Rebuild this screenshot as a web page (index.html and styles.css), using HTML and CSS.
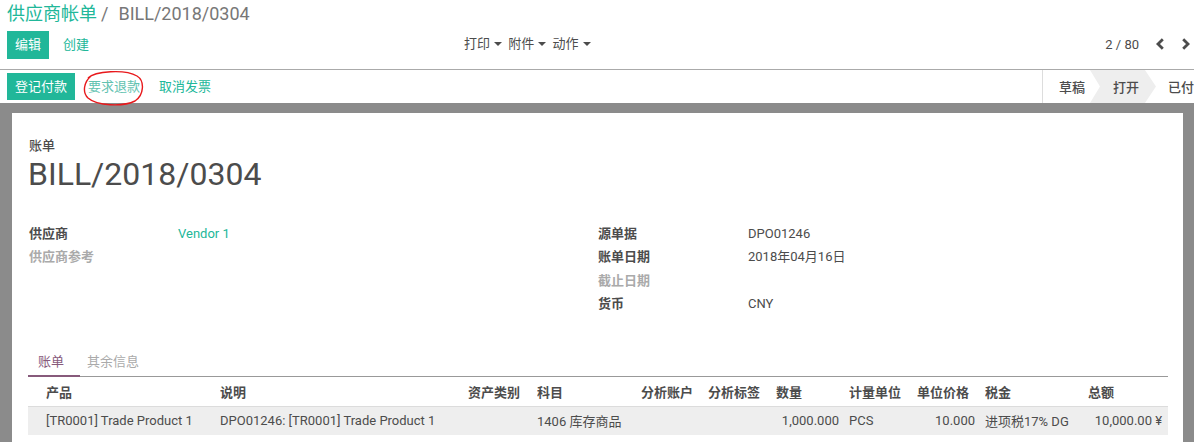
FILE: index.html
```html
<!DOCTYPE html>
<html lang="zh">
<head>
<meta charset="utf-8">
<title>BILL/2018/0304</title>
<link rel="stylesheet" href="styles.css">
</head>
<body>
<div class="control-panel">
  <div class="breadcrumb"><span class="crumb-link">供应商帐单</span><span class="crumb-sep">/</span><span class="crumb-active">BILL/2018/0304</span></div>
  <div class="cp-row">
    <div class="cp-left">
      <button class="btn btn-primary">编辑</button>
      <button class="btn btn-link">创建</button>
    </div>
    <div class="cp-center">
      <span class="dd">打印 <span class="caret"></span></span>
      <span class="dd">附件 <span class="caret"></span></span>
      <span class="dd">动作 <span class="caret"></span></span>
    </div>
    <div class="cp-right">
      <span class="pager-value">2 / 80</span>
      <span class="pager-btn"><svg width="10" height="12" viewBox="0 0 10 12"><path d="M7.8 1.3 L3 6 L7.8 10.7" fill="none" stroke="#4c4c4c" stroke-width="2.8"/></svg></span>
      <span class="pager-btn"><svg width="10" height="12" viewBox="0 0 10 12"><path d="M2.2 1.3 L7 6 L2.2 10.7" fill="none" stroke="#4c4c4c" stroke-width="2.8"/></svg></span>
    </div>
  </div>
</div>
<div class="statusbar">
  <div class="sb-buttons">
    <button class="btn btn-primary btn-sb">登记付款</button>
    <span class="btn-link-wrap">
      <button class="btn btn-link btn-refund">要求退款</button>
      <svg class="annot" width="62" height="36" viewBox="0 0 62 36"><path d="M5 8 C 12 1, 42 -1, 54 6 C 62 11, 61 25, 52 31 C 40 37, 14 36, 5 28 C -1 22, 1 12, 8 6" fill="none" stroke="#e8191c" stroke-width="1.4"/></svg>
    </span>
    <button class="btn btn-link btn-cancel">取消发票</button>
  </div>
  <div class="sb-status">
    <span class="st st-first">草稿</span>
    <span class="st st-current">打开</span>
    <span class="st st-last">已付</span>
  </div>
</div>
<div class="content">
  <div class="sheet">
    <div class="title-label">账单</div>
    <h1 class="title">BILL/2018/0304</h1>
    <div class="groups">
      <div class="group">
        <div class="field"><span class="f-label">供应商</span><span class="f-value f-link">Vendor 1</span></div>
        <div class="field"><span class="f-label f-muted">供应商参考</span><span class="f-value"></span></div>
      </div>
      <div class="group">
        <div class="field"><span class="f-label">源单据</span><span class="f-value">DPO01246</span></div>
        <div class="field"><span class="f-label">账单日期</span><span class="f-value">2018年04月16日</span></div>
        <div class="field"><span class="f-label f-muted">截止日期</span><span class="f-value"></span></div>
        <div class="field"><span class="f-label">货币</span><span class="f-value">CNY</span></div>
      </div>
    </div>
    <div class="tabs">
      <span class="tab tab-active">账单</span>
      <span class="tab">其余信息</span>
    </div>
    <table class="lines">
      <thead>
        <tr>
          <th class="c1">产品</th>
          <th class="c2">说明</th>
          <th class="c3">资产类别</th>
          <th class="c4">科目</th>
          <th class="c5">分析账户</th>
          <th class="c6">分析标签</th>
          <th class="c7">数量</th>
          <th class="c8">计量单位</th>
          <th class="c9">单位价格</th>
          <th class="c10">税金</th>
          <th class="c11">总额</th>
        </tr>
      </thead>
      <tbody>
        <tr>
          <td class="c1">[TR0001] Trade Product 1</td>
          <td>DPO01246: [TR0001] Trade Product 1</td>
          <td></td>
          <td>1406 库存商品</td>
          <td></td>
          <td></td>
          <td class="num">1,000.000</td>
          <td>PCS</td>
          <td class="num">10.000</td>
          <td>进项税17% DG</td>
          <td class="num c11">10,000.00 ¥</td>
        </tr>
      </tbody>
    </table>
  </div>
</div>
</body>
</html>
```
FILE: styles.css
```css
* { box-sizing: border-box; }
html, body { margin: 0; padding: 0; }
body {
  font-family: Roboto, "Noto Sans CJK SC", sans-serif;
  font-size: 13px;
  color: #4c4c4c;
  background: #8b8b8b;
  width: 1194px;
  height: 442px;
  overflow: hidden;
}
button { font-family: inherit; font-size: 13px; cursor: pointer; }

.control-panel {
  background: #fff;
  height: 70px;
  padding: 2px 7px 0;
  border-bottom: 1px solid #aaa;
}
.breadcrumb { font-size: 18px; line-height: 24px; height: 24px; white-space: nowrap; }
.crumb-link { color: #21b799; }
.crumb-sep { color: #777; margin: 0 10px 0 4px; }
.crumb-active { color: #777; }

.cp-row {
  display: grid;
  grid-template-columns: 457px auto 1fr;
  align-items: center;
  margin-top: 5px;
  height: 28px;
}
.cp-left { display: flex; align-items: center; }
.btn {
  border: 0;
  height: 28px;
  padding: 0 8px;
  line-height: 28px;
  background: transparent;
  border-radius: 0;
}
.btn-primary { background: #21b799; color: #fff; }
.btn-link { color: #21b799; padding: 0 14px; }
.cp-center { display: flex; gap: 6px; color: #4c4c4c; margin-top: -6px; }
.dd { white-space: nowrap; }
.caret {
  display: inline-block;
  width: 0; height: 0;
  border-left: 4px solid transparent;
  border-right: 4px solid transparent;
  border-top: 4px solid #4c4c4c;
  vertical-align: middle;
  margin-left: 1px;
}
.cp-right { display: flex; justify-content: flex-end; align-items: center; margin-top: -2px; margin-right: -4px; gap: 16px; }
.pager-value { margin-right: 0; }
.pager-btn { display: inline-flex; width: 10px; justify-content: center; }

.statusbar {
  background: #fff;
  height: 33px;
  display: flex;
  justify-content: space-between;
  align-items: stretch;
  padding-left: 7px;
}
.sb-buttons { display: flex; align-items: center; }
.btn-sb { height: 27px; line-height: 27px; }
.btn-link-wrap { position: relative; display: inline-flex; }
.btn-refund { color: #62c2b0; padding: 0 10px 0 13px; }
.btn-cancel { padding: 0 10px 0 9px; }
.annot { position: absolute; left: 8px; top: -3px; pointer-events: none; }
.sb-status { display: flex; align-items: stretch; border-left: 1px solid #ddd; }
.st {
  display: flex;
  align-items: center;
  font-weight: 500;
  color: #4c4c4c;
  white-space: nowrap;
}
.st-first { padding: 0 5px 0 16px; }
.st-current {
  background: #eeeeee;
  width: 66px;
  padding: 0 0 0 23px;
  clip-path: polygon(0 0, 55px 0, 100% 50%, 55px 100%, 0 100%, 10px 50%);
}
.st-last { padding: 0 0 0 12px; }

.content { padding: 10px 11px 0 12px; }
.sheet {
  background: #fff;
  padding: 24px 15px 8px 16px;
}
.title-label { font-weight: 500; line-height: 18px; padding-left: 1px; }
.title {
  margin: 0;
  font-size: 32px;
  font-weight: 400;
  line-height: 38px;
  color: #4c4c4c;
}
.groups { display: grid; grid-template-columns: 569px 1fr; margin-top: 29px; padding-left: 1px; }
.field { display: flex; height: 23.4px; line-height: 23.4px; }
.f-label { width: 150px; font-weight: 700; color: #4c4c4c; }
.f-muted { color: #aaa; }
.f-link { color: #21b799; }
.group:first-child .f-label { width: 149px; }

.tabs {
  margin-top: 33px;
  display: flex;
  border-bottom: 1px solid #999;
  height: 28px;
}
.tab {
  padding: 0 10px;
  line-height: 26px;
  color: #aaa;
}
.tab-active {
  color: #875a7b;
  border-bottom: 2px solid #875a7b;
  margin-bottom: -1px;
  width: 52px;
}
.tab + .tab { padding-left: 7px; }

.lines {
  width: 1140px;
  table-layout: fixed;
  border-collapse: collapse;
}
.lines th, .lines td {
  text-align: left;
  padding: 0 10px 0 0;
  white-space: nowrap;
  overflow: hidden;
}
.lines th { height: 30px; font-weight: 700; }
.lines td { height: 28px; background: #eeeeee; border-top: 1px solid #dcdcdc; }
.lines .c1 { padding-left: 18px; width: 192px; }
.lines .c2 { width: 248px; }
.lines .c3 { width: 69px; }
.lines .c4 { width: 104px; }
.lines .c5 { width: 67px; }
.lines .c6 { width: 68px; }
.lines .c7 { width: 73px; }
.lines .c8 { width: 68px; }
.lines .c9 { width: 68px; }
.lines .c10 { width: 103px; }
.lines .c11 { width: 80px; padding-right: 6px; }
.lines td.num { text-align: right; }
```
